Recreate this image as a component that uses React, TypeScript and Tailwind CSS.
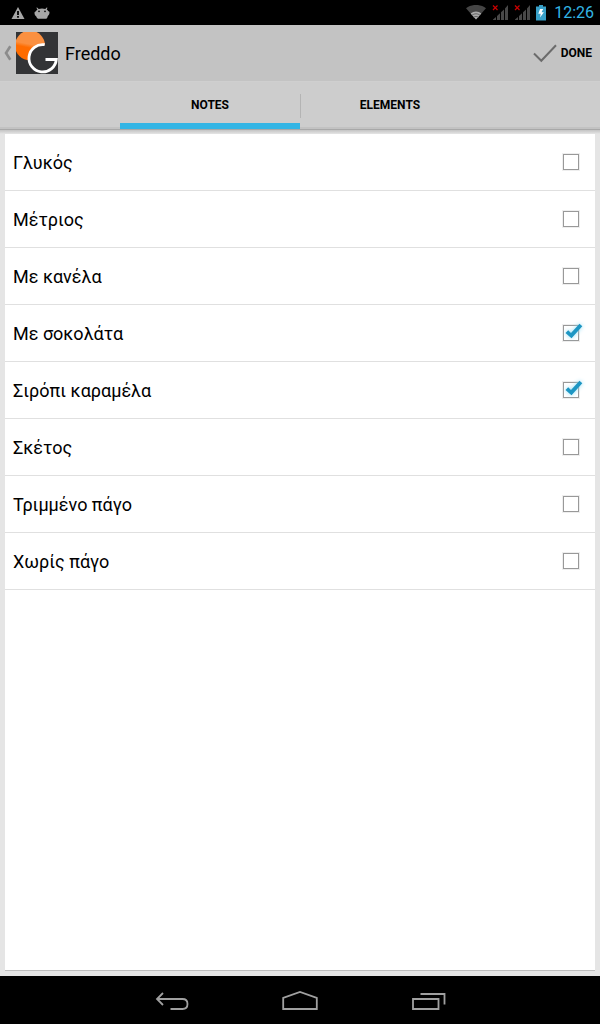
import { useState } from "react";
import { clsx } from "clsx";

const TABS = ["Notes", "Elements"];

const NOTES = [
  { id: "sweet", label: "Γλυκός", checked: false },
  { id: "medium", label: "Μέτριος", checked: false },
  { id: "cinnamon", label: "Με κανέλα", checked: false },
  { id: "chocolate", label: "Με σοκολάτα", checked: true },
  { id: "caramel", label: "Σιρόπι καραμέλα", checked: true },
  { id: "plain", label: "Σκέτος", checked: false },
  { id: "crushed-ice", label: "Τριμμένο πάγο", checked: false },
  { id: "no-ice", label: "Χωρίς πάγο", checked: false },
];

export default function App() {
  const [activeTab, setActiveTab] = useState("Notes");
  const [notes, setNotes] = useState(NOTES);

  function toggle(id: string) {
    setNotes((prev) => prev.map((n) => (n.id === id ? { ...n, checked: !n.checked } : n)));
  }

  return (
    <div className="flex min-h-screen flex-col bg-[#e5e5e5] font-[Roboto,'Noto_Sans',sans-serif] text-black">
      <StatusBar />

      <header className="flex h-[57px] items-center border-b border-[#cfcfcf] bg-[#c3c3c3] pr-2 pl-1">
        <button type="button" aria-label="Back" className="flex items-center gap-1">
          <svg className="h-4 w-2" viewBox="0 0 8 16" fill="none" aria-hidden="true">
            <path d="M6.3 1.2L2 8l4.3 6.8" stroke="#8c8c8c" strokeWidth="2.6" />
          </svg>
          <Logo />
        </button>
        <h1 className="ml-[7px] flex-1 pt-0.5 text-lg">Freddo</h1>
        <button type="button" className="flex items-center gap-1 text-xs font-bold">
          <svg className="h-6 w-6" viewBox="0 0 24 24" fill="none" aria-hidden="true">
            <path d="M1 12.5l7.3 7.2L23 4.2" stroke="#6b6b6b" strokeWidth="2" />
          </svg>
          DONE
        </button>
      </header>

      {/* Tabs */}
      <nav className="flex h-12 justify-center border-b border-[#a8a8a8] bg-[#cdcdcd] shadow-[inset_0_-2px_0_#c2c2c2]">
        {TABS.map((tab, i) => (
          <button
            key={tab}
            type="button"
            onClick={() => setActiveTab(tab)}
            className={clsx(
              "relative w-3/10 border-b-6 pt-1 text-xs font-bold uppercase",
              activeTab === tab ? "border-[#33b5e5]" : "border-transparent"
            )}
          >
            {i > 0 && <span className="absolute top-3 left-0 h-6 w-px bg-[#b4b4b4]" />}
            {tab}
          </button>
        ))}
      </nav>
      <div className="h-1 bg-linear-to-b from-[#c4c4c4] to-[#e5e5e5]" />

      <main className="flex flex-1 flex-col px-1 pb-1">
        <ul className="mx-px mb-px flex-1 border-b border-[#bdbdbd] bg-white">
          {notes.map((note) => (
            <li key={note.id} className="border-b border-[#e0e0e0]">
              <label className="flex h-14 items-center justify-between pr-4 pl-2 text-lg">
                <span className="pt-0.5">{note.label}</span>
                <span className="relative flex">
                  <input
                    type="checkbox"
                    checked={note.checked}
                    onChange={() => toggle(note.id)}
                    className="h-4 w-4 appearance-none border border-[#999999] bg-white outline-1 outline-[#eeeeee]"
                  />
                  {note.checked && <CheckMark />}
                </span>
              </label>
            </li>
          ))}
        </ul>
      </main>

      <NavBar />
    </div>
  );
}

function StatusBar() {
  return (
    <div className="flex h-[25px] items-center bg-black pr-1.5 pl-2.5">
      <svg className="h-4 w-4" viewBox="0 0 16 16" aria-hidden="true">
        <path d="M8 2l6.5 12h-13z" fill="#a6a6a6" />
        <path d="M7.1 6h1.8v4H7.1zM7.1 11h1.8v1.7H7.1z" fill="#000" />
      </svg>
      <svg className="ml-2 h-4 w-4" viewBox="0 0 16 16" aria-hidden="true">
        <path
          d="M3.5 4.5L2.3 2.8l.8-.4L4.700 4C6.500 3.300 9.500 3.300 11.300 4L12.700 2.400l.8.400L12.700 4.500c.8.500 1.300 1 1.500 1.700.8 0 1.300.5 1.300 1.300 0 1.500-.6 2.800-1.700 3.400-.3 1.900-1 2.700-2.200 2.900H5c-1.300-.2-2.300-1-2.700-2.400C1.100 10.700.5 9.500.5 8c0-.8.500-1.400 1.300-1.400.2-.9.800-1.600 1.700-2.100z"
          fill="#a6a6a6"
        />
        <circle cx="5" cy="6.4" r=".8" fill="#000" />
        <circle cx="11" cy="6.4" r=".8" fill="#000" />
      </svg>
      <div className="ml-auto flex items-center">
        <svg className="h-4 w-5" viewBox="0 0 20 16" aria-hidden="true">
          <path d="M0 3.2C5.500-1.200 14.500-1.200 20 3.200L10 14.500z" fill="#454545" />
          <path d="M4.600 8.400c3.200-2.700 7.600-2.700 10.800 0L10 14.500z" fill="#aaaaaa" />
          <path d="M5.900 10.300c2.500-2 5.700-2 8.200 0M7.500 12.300c1.500-1.200 3.500-1.200 5 0" stroke="#555" strokeWidth=".8" fill="none" />
        </svg>
        <Signal />
        <Signal />
        <svg className="ml-1.5 h-4 w-2.5" viewBox="0 0 10 16" aria-hidden="true">
          <path d="M3 0h4v1.500h3V15.500H0V1.500h3z" fill="#38a0c8" />
          <path d="M4 4L2.300 8.700h2.400L4 12.500 7.900 7.200H5.500L7.200 4z" fill="#fff" />
        </svg>
        <span className="ml-2 text-base text-[#33b5e5]">12:26</span>
      </div>
    </div>
  );
}

function Signal() {
  return (
    <svg className="ml-1.5 h-4 w-4" viewBox="0 0 16 16" aria-hidden="true">
      <path
        d="M1 14.500L4 12v3H1zM5 11l3-2.700V15H5zM9 7.300l3-2.700V15H9zM13 3.600L16 0v15h-3z"
        fill="#484848"
      />
      <path d="M1 .5l4.500 4.500M5.500 .5L1 5" stroke="#cc0000" strokeWidth="1.200" />
    </svg>
  );
}

function Logo() {
  return (
    <svg className="h-[42px] w-[42px]" viewBox="0 0 42 42" aria-hidden="true">
      <defs>
        <linearGradient id="logo-sun" x1="0.6" y1="0" x2="0.4" y2="1">
          <stop offset="0.46" stopColor="#fb9040" />
          <stop offset="0.58" stopColor="#ff6c00" />
        </linearGradient>
      </defs>
      <rect width="42" height="42" fill="#333436" />
      <circle cx="14" cy="13.5" r="15" fill="url(#logo-sun)" />
      <circle cx="26.6" cy="26.3" r="13.7" fill="#333436" />
      <path
        d="M28.7 12.7A13.7 13.7 0 1 0 40.3 27.5H29.5"
        fill="none"
        stroke="#fff"
        strokeWidth="2.8"
      />
    </svg>
  );
}

function CheckMark() {
  return (
    <svg
      className="pointer-events-none absolute -top-1 -left-1 h-6 w-6 drop-shadow-[0_0_2px_#8fdcf5]"
      viewBox="0 0 24 24"
      aria-hidden="true"
    >
      <path d="M6.5 12l2.700-2.700 2.800 2.700 8.500-9.200L23.300 5.300 12.500 17.200z" fill="#1d96c3" />
    </svg>
  );
}

function NavBar() {
  return (
    <footer className="flex h-12 items-center justify-center bg-black">
      <button type="button" aria-label="Back" className="flex w-32 justify-center">
        <svg className="h-8 w-9" viewBox="0 0 36 32" fill="none" stroke="#a0a0a0" strokeWidth="1.8" aria-hidden="true">
          <path d="M3 15h25.500c3.500 0 5 2 5 5s-1.500 5-5 5H16.500M9 9l-6 6 6 6" />
        </svg>
      </button>
      <button type="button" aria-label="Home" className="flex w-32 justify-center">
        <svg className="h-8 w-9" viewBox="0 0 36 32" fill="none" stroke="#a0a0a0" strokeWidth="1.8" aria-hidden="true">
          <path d="M1.200 25V14L18 8l16.800 6V25z" />
        </svg>
      </button>
      <button type="button" aria-label="Recent apps" className="flex w-32 justify-center">
        <svg className="h-8 w-9" viewBox="0 0 36 32" fill="none" stroke="#a0a0a0" strokeWidth="1.8" aria-hidden="true">
          <path d="M3 15h25.500v10H3zM10.500 10H34.500v10.500" />
        </svg>
      </button>
    </footer>
  );
}
